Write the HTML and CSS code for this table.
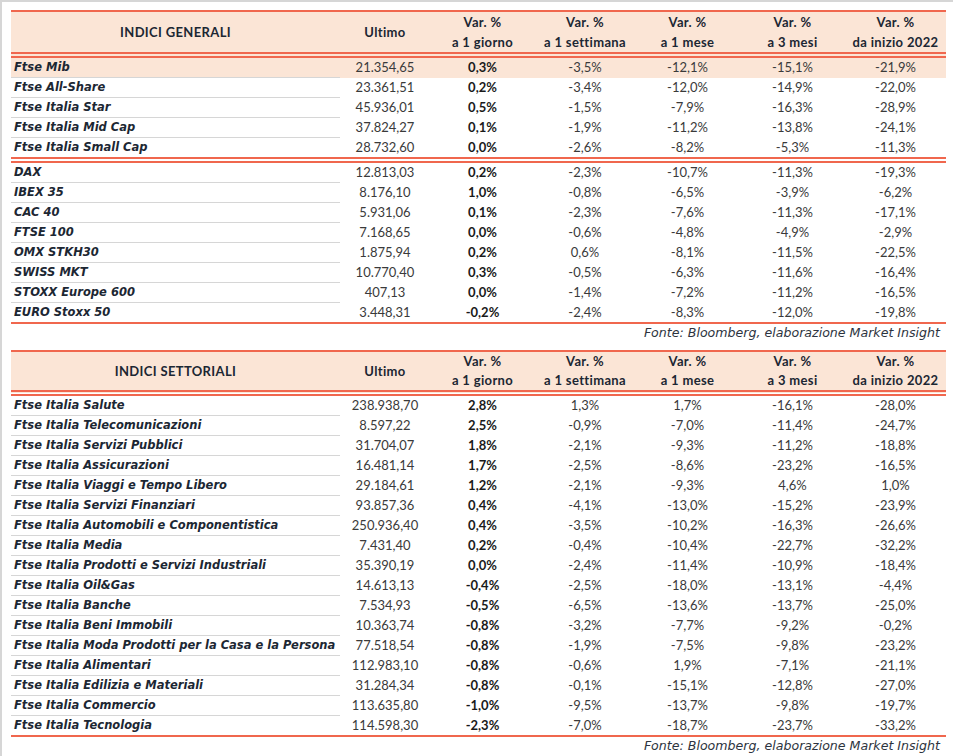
FILE: index.html
```html
<!DOCTYPE html>
<html lang="it">
<head>
<meta charset="utf-8">
<title>Indici</title>
<link rel="stylesheet" href="styles.css">
</head>
<body>
<div class="sheet">
  <table class="tbl">
    <colgroup>
      <col class="c-name"><col class="c-last"><col class="c-v1"><col class="c-v2"><col class="c-v3"><col class="c-v4"><col class="c-v5">
    </colgroup>
    <thead>
      <tr class="head">
        <th class="name-h">INDICI GENERALI</th>
        <th>Ultimo</th>
        <th>Var. %<br>a 1 giorno</th>
        <th>Var. %<br>a 1 settimana</th>
        <th>Var. %<br>a 1 mese</th>
        <th>Var. %<br>a 3 mesi</th>
        <th>Var. %<br>da inizio 2022</th>
      </tr>
    </thead>
    <tbody>
      <tr class="hl"><td class="name">Ftse Mib</td><td>21.354,65</td><td class="b">0,3%</td><td>-3,5%</td><td>-12,1%</td><td>-15,1%</td><td>-21,9%</td></tr>
      <tr><td class="name">Ftse All-Share</td><td>23.361,51</td><td class="b">0,2%</td><td>-3,4%</td><td>-12,0%</td><td>-14,9%</td><td>-22,0%</td></tr>
      <tr><td class="name">Ftse Italia Star</td><td>45.936,01</td><td class="b">0,5%</td><td>-1,5%</td><td>-7,9%</td><td>-16,3%</td><td>-28,9%</td></tr>
      <tr><td class="name">Ftse Italia Mid Cap</td><td>37.824,27</td><td class="b">0,1%</td><td>-1,9%</td><td>-11,2%</td><td>-13,8%</td><td>-24,1%</td></tr>
      <tr class="grp-end"><td class="name">Ftse Italia Small Cap</td><td>28.732,60</td><td class="b">0,0%</td><td>-2,6%</td><td>-8,2%</td><td>-5,3%</td><td>-11,3%</td></tr>
      <tr><td class="name">DAX</td><td>12.813,03</td><td class="b">0,2%</td><td>-2,3%</td><td>-10,7%</td><td>-11,3%</td><td>-19,3%</td></tr>
      <tr><td class="name">IBEX 35</td><td>8.176,10</td><td class="b">1,0%</td><td>-0,8%</td><td>-6,5%</td><td>-3,9%</td><td>-6,2%</td></tr>
      <tr><td class="name">CAC 40</td><td>5.931,06</td><td class="b">0,1%</td><td>-2,3%</td><td>-7,6%</td><td>-11,3%</td><td>-17,1%</td></tr>
      <tr><td class="name">FTSE 100</td><td>7.168,65</td><td class="b">0,0%</td><td>-0,6%</td><td>-4,8%</td><td>-4,9%</td><td>-2,9%</td></tr>
      <tr><td class="name">OMX STKH30</td><td>1.875,94</td><td class="b">0,2%</td><td>0,6%</td><td>-8,1%</td><td>-11,5%</td><td>-22,5%</td></tr>
      <tr><td class="name">SWISS MKT</td><td>10.770,40</td><td class="b">0,3%</td><td>-0,5%</td><td>-6,3%</td><td>-11,6%</td><td>-16,4%</td></tr>
      <tr><td class="name">STOXX Europe 600</td><td>407,13</td><td class="b">0,0%</td><td>-1,4%</td><td>-7,2%</td><td>-11,2%</td><td>-16,5%</td></tr>
      <tr class="last"><td class="name">EURO Stoxx 50</td><td>3.448,31</td><td class="b">-0,2%</td><td>-2,4%</td><td>-8,3%</td><td>-12,0%</td><td>-19,8%</td></tr>
    </tbody>
  </table>
  <p class="source">Fonte: Bloomberg, elaborazione Market Insight</p>

  <table class="tbl tbl-2">
    <colgroup>
      <col class="c-name"><col class="c-last"><col class="c-v1"><col class="c-v2"><col class="c-v3"><col class="c-v4"><col class="c-v5">
    </colgroup>
    <thead>
      <tr class="head">
        <th class="name-h">INDICI SETTORIALI</th>
        <th>Ultimo</th>
        <th>Var. %<br>a 1 giorno</th>
        <th>Var. %<br>a 1 settimana</th>
        <th>Var. %<br>a 1 mese</th>
        <th>Var. %<br>a 3 mesi</th>
        <th>Var. %<br>da inizio 2022</th>
      </tr>
    </thead>
    <tbody>
      <tr><td class="name">Ftse Italia Salute</td><td>238.938,70</td><td class="b">2,8%</td><td>1,3%</td><td>1,7%</td><td>-16,1%</td><td>-28,0%</td></tr>
      <tr><td class="name">Ftse Italia Telecomunicazioni</td><td>8.597,22</td><td class="b">2,5%</td><td>-0,9%</td><td>-7,0%</td><td>-11,4%</td><td>-24,7%</td></tr>
      <tr><td class="name">Ftse Italia Servizi Pubblici</td><td>31.704,07</td><td class="b">1,8%</td><td>-2,1%</td><td>-9,3%</td><td>-11,2%</td><td>-18,8%</td></tr>
      <tr><td class="name">Ftse Italia Assicurazioni</td><td>16.481,14</td><td class="b">1,7%</td><td>-2,5%</td><td>-8,6%</td><td>-23,2%</td><td>-16,5%</td></tr>
      <tr><td class="name">Ftse Italia Viaggi e Tempo Libero</td><td>29.184,61</td><td class="b">1,2%</td><td>-2,1%</td><td>-9,3%</td><td>4,6%</td><td>1,0%</td></tr>
      <tr><td class="name">Ftse Italia Servizi Finanziari</td><td>93.857,36</td><td class="b">0,4%</td><td>-4,1%</td><td>-13,0%</td><td>-15,2%</td><td>-23,9%</td></tr>
      <tr><td class="name">Ftse Italia Automobili e Componentistica</td><td>250.936,40</td><td class="b">0,4%</td><td>-3,5%</td><td>-10,2%</td><td>-16,3%</td><td>-26,6%</td></tr>
      <tr><td class="name">Ftse Italia Media</td><td>7.431,40</td><td class="b">0,2%</td><td>-0,4%</td><td>-10,4%</td><td>-22,7%</td><td>-32,2%</td></tr>
      <tr><td class="name">Ftse Italia Prodotti e Servizi Industriali</td><td>35.390,19</td><td class="b">0,0%</td><td>-2,4%</td><td>-11,4%</td><td>-10,9%</td><td>-18,4%</td></tr>
      <tr><td class="name">Ftse Italia Oil&amp;Gas</td><td>14.613,13</td><td class="b">-0,4%</td><td>-2,5%</td><td>-18,0%</td><td>-13,1%</td><td>-4,4%</td></tr>
      <tr><td class="name">Ftse Italia Banche</td><td>7.534,93</td><td class="b">-0,5%</td><td>-6,5%</td><td>-13,6%</td><td>-13,7%</td><td>-25,0%</td></tr>
      <tr><td class="name">Ftse Italia Beni Immobili</td><td>10.363,74</td><td class="b">-0,8%</td><td>-3,2%</td><td>-7,7%</td><td>-9,2%</td><td>-0,2%</td></tr>
      <tr><td class="name">Ftse Italia Moda Prodotti per la Casa e la Persona</td><td>77.518,54</td><td class="b">-0,8%</td><td>-1,9%</td><td>-7,5%</td><td>-9,8%</td><td>-23,2%</td></tr>
      <tr><td class="name">Ftse Italia Alimentari</td><td>112.983,10</td><td class="b">-0,8%</td><td>-0,6%</td><td>1,9%</td><td>-7,1%</td><td>-21,1%</td></tr>
      <tr><td class="name">Ftse Italia Edilizia e Materiali</td><td>31.284,34</td><td class="b">-0,8%</td><td>-0,1%</td><td>-15,1%</td><td>-12,8%</td><td>-27,0%</td></tr>
      <tr><td class="name">Ftse Italia Commercio</td><td>113.635,80</td><td class="b">-1,0%</td><td>-9,5%</td><td>-13,7%</td><td>-9,8%</td><td>-19,7%</td></tr>
      <tr class="last"><td class="name">Ftse Italia Tecnologia</td><td>114.598,30</td><td class="b">-2,3%</td><td>-7,0%</td><td>-18,7%</td><td>-23,7%</td><td>-33,2%</td></tr>
    </tbody>
  </table>
  <p class="source">Fonte: Bloomberg, elaborazione Market Insight</p>
</div>
</body>
</html>
```
FILE: styles.css
```css
html, body {
  margin: 0;
  padding: 0;
  background: #ffffff;
}
body {
  font-family: "Lato", "Liberation Sans", sans-serif;
  font-size: 13px;
  color: #333333;
}
.sheet {
  width: 951px;
  height: 754px;
  border-top: 2px solid #d6d6d6;
  border-left: 2px solid #d6d6d6;
  padding: 8px 0 0 9px;
  box-sizing: content-box;
  overflow: hidden;
}
.tbl {
  width: 935px;
  table-layout: fixed;
  border-collapse: collapse;
  border-top: 2px solid #f0674e;
  border-bottom: 2px solid #f0674e;
}
.c-name { width: 329px; }
.c-last { width: 90px; }
.c-v1 { width: 105px; }
.c-v2 { width: 100px; }
.c-v3 { width: 105px; }
.c-v4 { width: 105px; }
.c-v5 { width: 101px; }

.head th {
  background: #fbe5d6;
  height: 39px;
  padding: 0;
  font-weight: 700;
  line-height: 20px;
  letter-spacing: 0.35px;
  text-align: center;
  vertical-align: middle;
  color: #1c2733;
  border-bottom: 6px double #f0674e;
}
.tbl-2 .head th { height: 37px; line-height: 19px; }

.tbl td {
  height: 19px;
  padding: 0;
  line-height: 19px;
  text-align: center;
  white-space: nowrap;
  color: #3a3a3a;
}
.tbl td.name {
  text-align: left;
  padding-left: 3px;
  font-family: "DejaVu Sans", "Liberation Sans", sans-serif;
  font-size: 11.5px;
  font-weight: 700;
  font-style: italic;
  color: #1c2733;
  border-bottom: 1px solid #d6d6d6;
}
.tbl td.b {
  font-weight: 700;
  color: #1a1a1a;
}
.tbl tr.hl td { background: #fbe5d6; }
.tbl tr.grp-end td { border-bottom: 6px double #f0674e; }
.tbl tr.last td.name { border-bottom: none; }

.source {
  margin: 0;
  width: 935px;
  height: 26px;
  line-height: 18px;
  text-align: right;
  font-family: "DejaVu Sans", "Liberation Sans", sans-serif;
  font-size: 12.6px;
  font-style: italic;
  color: #2d3440;
  padding-right: 6px;
  box-sizing: border-box;
}
```
